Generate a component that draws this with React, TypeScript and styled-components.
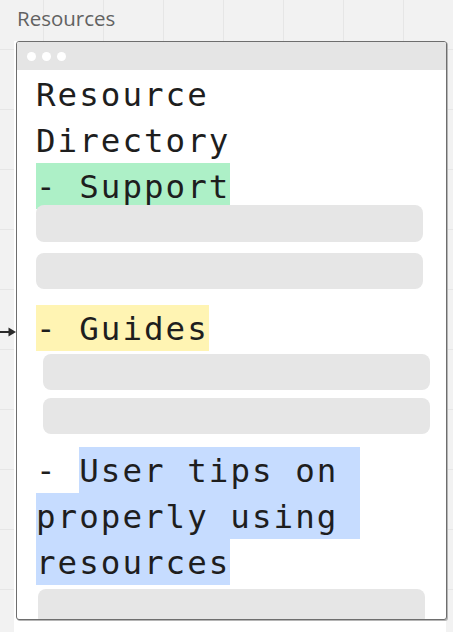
import styled, { createGlobalStyle } from 'styled-components';

const GlobalStyle = createGlobalStyle`
  html, body {
    margin: 0;
    padding: 0;
  }
  body {
    width: 453px;
    height: 632px;
    overflow: hidden;
    background-color: #f2f2f2;
    background-image:
      linear-gradient(to right, #e6e6e6 1px, transparent 1px),
      linear-gradient(to bottom, #e6e6e6 1px, transparent 1px);
    background-size: 60px 60px;
    background-position: 43px 49px;
  }
`;

const Board = styled.div`
  position: relative;
  height: 632px;
  padding: 5px 0 0 17px;
  box-sizing: border-box;
  display: flex;
  flex-direction: column;
`;

const FrameLabel = styled.div`
  font-family: 'Open Sans', 'Noto Sans', sans-serif;
  font-size: 20.5px;
  color: #626262;
  line-height: 27px;
`;

const Backing = styled.div`
  margin: 9px 0 0 -3px;
  width: 432px;
  flex: 1;
  background: #ffffff;
`;

const Window = styled.div`
  margin-left: 2px;
  width: 431px;
  height: 579px;
  box-sizing: border-box;
  border: 1px solid #6e6e6e;
  border-radius: 3px;
  box-shadow: 1px 1px 0 #b5b5b5;
  background: #ffffff;
  overflow: hidden;
  display: flex;
  flex-direction: column;
`;

const TitleBar = styled.div`
  height: 28px;
  flex: none;
  background: #e5e5e5;
  display: flex;
  align-items: center;
  gap: 6px;
  padding-left: 10px;
`;

const Dot = styled.span`
  width: 9px;
  height: 9px;
  border-radius: 50%;
  background: #ffffff;
`;

const Content = styled.div`
  padding: 1px 0 0 19px;
  display: flex;
  flex-direction: column;
`;

const Line = styled.div<{ $gap?: number }>`
  height: 46px;
  line-height: 48px;
  margin-top: ${(p) => p.$gap ?? 0}px;
  white-space: pre;
  font-family: 'DejaVu Sans Mono', 'Liberation Mono', monospace;
  font-size: 32.5px;
  letter-spacing: 2.03px;
  color: #1e1e1e;
`;

const Mark = styled.span<{ $color: string }>`
  display: inline-block;
  height: 46px;
  vertical-align: top;
  background: ${(p) => p.$color};
`;

const Bar = styled.div<{ $offset?: number; $gap?: number; $h?: number }>`
  width: 387px;
  height: ${(p) => p.$h ?? 36}px;
  margin-left: ${(p) => p.$offset ?? 0}px;
  margin-top: ${(p) => p.$gap ?? 0}px;
  border-radius: 8px;
  background: #e6e6e6;
  flex: none;
`;

const Connector = styled.svg`
  position: absolute;
  left: 0;
  top: 327px;
`;

const GREEN = '#adf0c7';
const YELLOW = '#fff4b3';
const BLUE = '#c6dcff';

export default function App() {
  return (
    <>
      <GlobalStyle />
      <Board>
        <FrameLabel>Resources</FrameLabel>
        <Backing>
          <Window>
            <TitleBar>
              <Dot />
              <Dot />
              <Dot />
            </TitleBar>
            <Content>
              <Line>Resource</Line>
              <Line>Directory</Line>
              <Line>
                <Mark $color={GREEN}>- Support</Mark>
              </Line>
              <Bar $gap={-4} $h={37} />
              <Bar $gap={11} />
              <Line $gap={16}>
                <Mark $color={YELLOW}>- Guides</Mark>
              </Line>
              <Bar $offset={7} $gap={3} />
              <Bar $offset={7} $gap={8} />
              <Line $gap={13}>
                {'- '}
                <Mark $color={BLUE}>User tips on </Mark>
              </Line>
              <Line>
                <Mark $color={BLUE}>properly using </Mark>
              </Line>
              <Line>
                <Mark $color={BLUE}>resources</Mark>
              </Line>
              <Bar $offset={2} $gap={4} />
            </Content>
          </Window>
        </Backing>
        <Connector width="17" height="10" viewBox="0 0 17 10">
          <line x1="0" y1="5" x2="11" y2="5" stroke="#2b2b2b" strokeWidth="2" />
          <path d="M8.5 0.5 L16 5 L8.5 9.5 Z" fill="#2b2b2b" />
        </Connector>
      </Board>
    </>
  );
}
